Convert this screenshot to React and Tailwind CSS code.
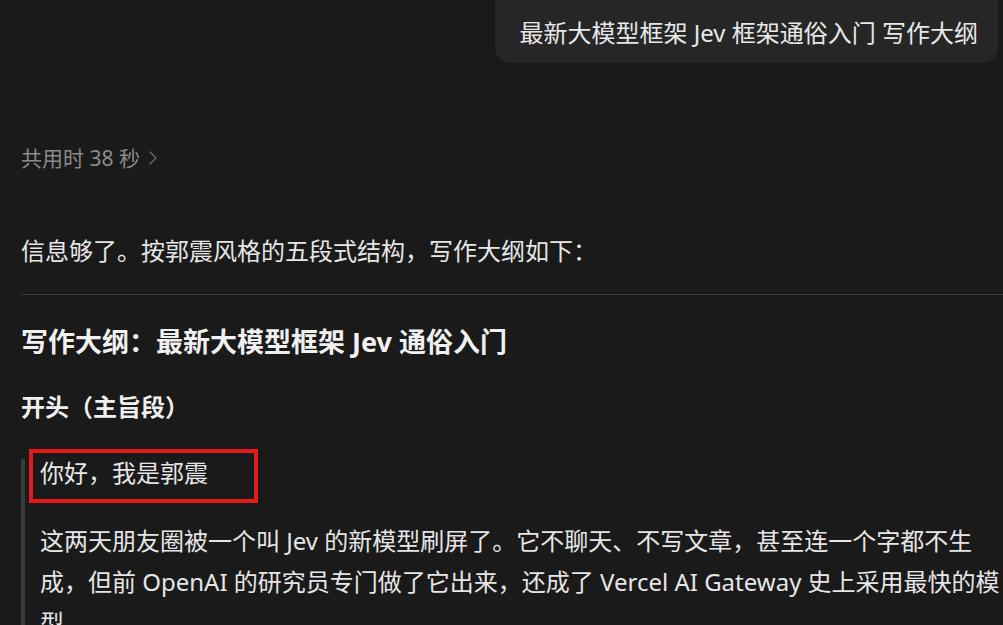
const font = {
  fontFamily: '"Noto Sans", "Noto Sans CJK SC", sans-serif',
};

export default function App() {
  return (
    <div
      className="min-h-[625px] w-full overflow-hidden bg-[#1a1a1a] text-[#e6e6e6]"
      style={font}
    >
      {/* user message */}
      <div className="flex justify-end pr-[5px]">
        <div className="mt-[-20px] rounded-[16px] bg-[#262626] pl-[24px] pr-[20px] pt-[35px] pb-[12px] text-[24px] leading-[36px] text-[#e8e8e8]">
          最新大模型框架 Jev 框架通俗入门 写作大纲
        </div>
      </div>

      <div className="pl-[21px]">
        {/* thinking time */}
        <div className="mt-[80px] flex items-center gap-[9px] text-[21px] leading-[30px] text-[#8a8a8a]">
          <span>共用时 38 秒</span>
          <svg width="8" height="14" viewBox="0 0 8 14" fill="none">
            <polyline
              points="1,1 7,7 1,13"
              stroke="#6a6a6a"
              strokeWidth="1.4"
              strokeLinecap="round"
              strokeLinejoin="round"
            />
          </svg>
        </div>

        <p className="mt-[57px] text-[24px] leading-[41px]">
          信息够了。按郭震风格的五段式结构，写作大纲如下：
        </p>

        <hr className="mt-[23px] border-0 border-t border-[#3b3b3b]" />

        <h2 className="mt-[29px] text-[27px] font-bold leading-[36px] text-[#f0f0f0]">
          写作大纲：最新大模型框架 Jev 通俗入门
        </h2>

        <h3 className="mt-[29px] text-[24px] font-bold leading-[36px] text-[#f0f0f0]">
          开头（主旨段）
        </h3>

        <blockquote className="mt-[34px] flex flex-col border-l-4 border-[#3a3a3a] pl-[15px] text-[24px] leading-[41px]">
          <p className="relative mt-[-7px]">
            你好，我是郭震
            <span className="pointer-events-none absolute left-[-11px] top-[-3px] h-[54px] w-[229px] border-4 border-[#e31b1b]" />
          </p>
          <p className="mt-[27px]">
            这两天朋友圈被一个叫 Jev 的新模型刷屏了。它不聊天、不写文章，甚至连一个字都不生成，但前 OpenAI 的研究员专门做了它出来，还成了 Vercel AI Gateway 史上采用最快的模型
          </p>
        </blockquote>
      </div>
    </div>
  );
}
